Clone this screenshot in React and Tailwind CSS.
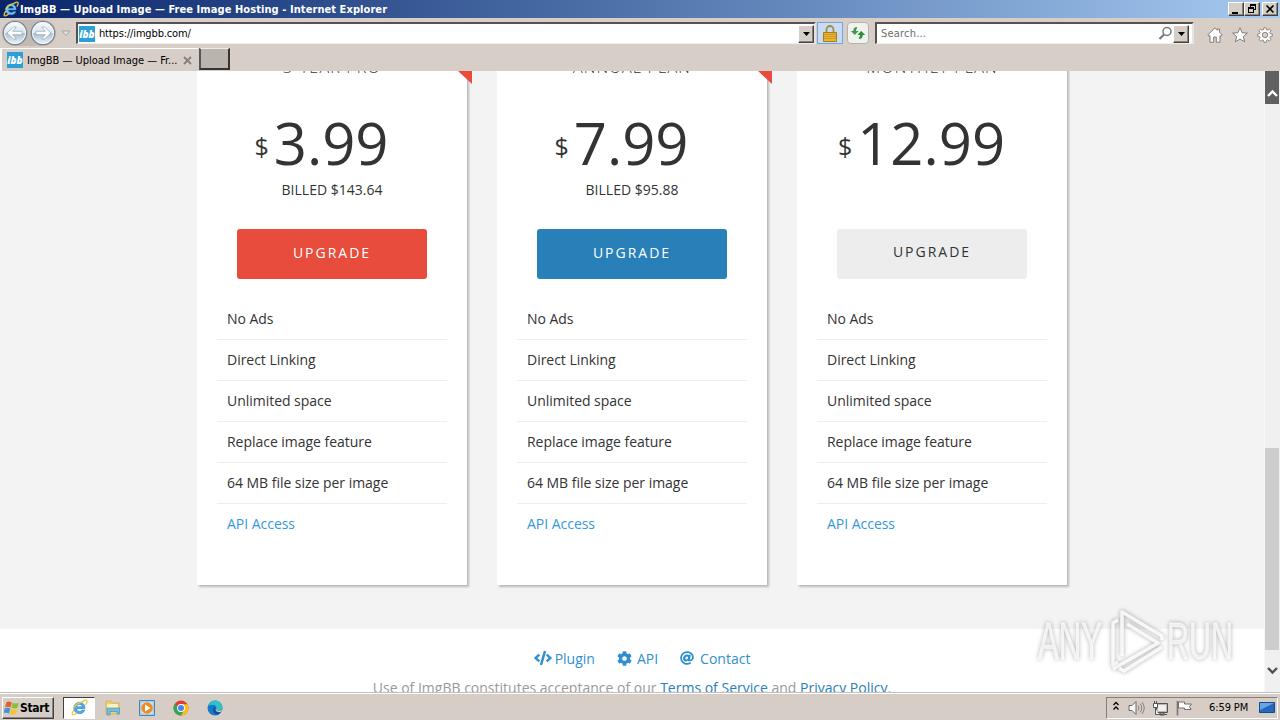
import clsx from "clsx";
import { FaCode, FaCog, FaAt } from "react-icons/fa";

const features = [
  "No Ads",
  "Direct Linking",
  "Unlimited space",
  "Replace image feature",
  "64 MB file size per image",
];

const plans = [
  {
    name: "3-year pro",
    price: "3.99",
    billed: "Billed $143.64",
    ribbon: true,
    button: "bg-[#e74c3c] text-white font-medium pb-[3px]",
  },
  {
    name: "Annual plan",
    price: "7.99",
    billed: "Billed $95.88",
    ribbon: true,
    button: "bg-[#2980b9] text-white font-medium pb-[3px]",
  },
  {
    name: "Monthly plan",
    price: "12.99",
    billed: "",
    ribbon: false,
    button: "bg-[#ededed] text-[#333] pb-[5px]",
  },
];

const raised =
  "bg-[#d4cec7] border border-t-white border-l-white border-r-[#404040] border-b-[#404040] shadow-[inset_-1px_-1px_0_#8a8580]";

function IELogo({ size = 16, fill = "#4ea9ea" }) {
  return (
    <svg width={size} height={size} viewBox="0 0 18 18" className="shrink-0">
      <path
        d="M14.900 10.200H6.100c.2 1.800 1.400 2.800 3 2.800 1.200 0 2-.5 2.500-1.300h3.100c-.8 2.500-3 3.900-5.700 3.900-3.600 0-6.100-2.400-6.100-6 0-3.500 2.600-6.200 6.100-6.200 3.700 0 6 2.700 5.900 6.800ZM6.200 8.100h5.500C11.500 6.600 10.500 5.700 9 5.700S6.400 6.600 6.200 8.100Z"
        fill={fill}
        stroke="#2678bd"
        strokeWidth=".5"
      />
      <path
        d="M3.300 11.200C.7 15 .5 17.500 3.300 16.500c1-.4 2-1 3-1.800M11.300 3.300C14.700.8 17.600.5 16.900 3.400c-.2.900-.7 1.900-1.400 2.900M3 9.500C4.500 6.500 8 4 11.500 3"
        fill="none"
        stroke="#f0c742"
        strokeWidth="1.400"
      />
    </svg>
  );
}

function Favicon() {
  return (
    <span className="flex h-4 w-4 shrink-0 items-center justify-center bg-[#2a9fd8] font-['Open_Sans',sans-serif] text-[10px] font-extrabold italic leading-none text-white">
      ibb
    </span>
  );
}

function NavCircle({ flip }) {
  return (
    <svg width="26" height="26" viewBox="0 0 26 26" className={clsx("shrink-0", flip && "-scale-x-100")}>
      <defs>
        <linearGradient id="orb" x1="0" y1="0" x2="0" y2="1">
          <stop offset="0" stopColor="#f9fcfe" />
          <stop offset=".48" stopColor="#d9e5ef" />
          <stop offset=".52" stopColor="#a9bfd4" />
          <stop offset="1" stopColor="#eef8fd" />
        </linearGradient>
      </defs>
      <circle cx="13" cy="13" r="11.700" fill="url(#orb)" stroke="#7d8791" strokeWidth="1.300" />
      <circle cx="13" cy="13" r="10.500" fill="none" stroke="#f4f8fb" strokeWidth="1" />
      <path d="M5 13l6.500-6h2.800l-3.600 4.300H20v3.400h-9.300l3.600 4.300h-2.800z" fill="#fff" stroke="#91a3b5" strokeWidth=".7" />
    </svg>
  );
}

function DropButton() {
  return (
    <span className={clsx("flex h-[18px] w-4 shrink-0 items-center justify-center", raised)}>
      <svg width="7" height="4" viewBox="0 0 7 4">
        <path d="M0 0h7L3.500 4z" fill="#000" />
      </svg>
    </span>
  );
}

function TitleBar() {
  return (
    <div className="flex h-[18px] items-center bg-gradient-to-r from-[#0a246a] to-[#a6caf0] pl-[3px] pr-[2px]">
      <IELogo size={16} fill="#6cc5f5" />
      <span className="ml-px whitespace-nowrap font-['DejaVu_Sans_Condensed','DejaVu_Sans',sans-serif] text-[11px] font-bold leading-none tracking-[0.075px] text-white">
        ImgBB — Upload Image — Free Image Hosting - Internet Explorer
      </span>
      <div className="ml-auto flex">
        <span className={clsx("h-[14px] w-4", raised)}>
          <svg width="14" height="12" viewBox="0 0 14 12">
            <path d="M3 9h6v2H3z" />
          </svg>
        </span>
        <span className={clsx("h-[14px] w-4", raised)}>
          <svg width="14" height="12" viewBox="0 0 14 12" shapeRendering="crispEdges">
            <path d="M5 1h6v6H9V6h1V3H6v1H5zM3 4h6v6H3zM4 6v3h4V6z" fillRule="evenodd" />
          </svg>
        </span>
        <span className={clsx("ml-[2px] h-[14px] w-4", raised)}>
          <svg width="14" height="12" viewBox="0 0 14 12">
            <path d="M3.500 2.500l7 7M10.500 2.500l-7 7" stroke="#000" strokeWidth="1.700" />
          </svg>
        </span>
      </div>
    </div>
  );
}

function Toolbar() {
  return (
    <div className="flex h-[30px] items-center bg-[#d6cec7] pl-[2px]">
      <div className="flex gap-[2px] rounded-full bg-[#c2bab4]">
        <NavCircle />
        <NavCircle flip />
      </div>
      <svg width="10" height="7" viewBox="0 0 10 7" className="ml-[5px] shrink-0">
        <path d="M1 1h8L5 5.500z" fill="#e6e2dd" stroke="#aaa49e" />
      </svg>
      <div className="ml-[5px] flex h-[22px] w-[740px] shrink-0 items-center border-2 border-b border-r-2 border-b-[#f3efeb] border-l-[#565250] border-r-[#e8e3de] border-t-[#565250] bg-white pl-px">
        <Favicon />
        <span className="ml-1 text-[11px] leading-none tracking-[-0.15px] text-black">https://imgbb.com/</span>
        <span className="ml-auto">
          <DropButton />
        </span>
      </div>
      <span className="ml-px flex h-[22px] w-[26px] shrink-0 items-center justify-center border border-[#76a5dc] bg-[#c8dcf6]">
        <svg width="14" height="17" viewBox="0 0 14 17">
          <path d="M3.500 8V4.500a3.500 3.500 0 017 0V8" fill="none" stroke="#a98b3e" strokeWidth="1.800" />
          <path d="M.5 7.500h13v9H.5z" fill="#e9b533" stroke="#a87b16" />
          <path d="M1 9.500h12M1 11.500h12M1 13.500h12" stroke="#c08d1e" strokeWidth=".7" />
        </svg>
      </span>
      <span className="ml-1 flex h-[22px] w-[22px] shrink-0 items-center justify-center rounded-sm border border-[#b3b3ae] bg-[#eff2ee]">
        <svg width="16" height="14" viewBox="0 0 16 14">
          <path d="M7 1C4.500 1 3.300 2.500 3.300 5H.8l4 4 3.800-4H6c0-1.300.2-2 1-2.500z" fill="#3d9a45" />
          <path d="M9 13c2.500 0 3.700-1.500 3.700-4h2.500l-4-4-3.800 4H10c0 1.300-.2 2-1 2.500z" fill="#2c8f33" />
        </svg>
      </span>
      <div className="ml-[6px] flex h-[22px] w-[319px] shrink-0 items-center border-2 border-b border-b-[#f3efeb] border-l-[#565250] border-r-[#e8e3de] border-t-[#565250] bg-white pl-1 pr-[3px]">
        <span className="text-[11px] leading-none tracking-[0.2px] text-[#6d6d6d]">Search...</span>
        <svg width="15" height="15" viewBox="0 0 15 15" className="ml-auto">
          <circle cx="9" cy="5.500" r="4" fill="none" stroke="#777" strokeWidth="1.500" />
          <path d="M6 8.500L1.500 13" stroke="#777" strokeWidth="2.200" />
        </svg>
        <DropButton />
      </div>
      <div className="ml-[13px] flex items-center gap-[9px] pt-[3px]">
        <svg width="16" height="16" viewBox="0 0 16 16">
          <path d="M8 .8L.8 8l1.400 1.300.8-.7v6.600h3.700V10h2.600v5.200H13V8.600l.8.700L15.200 8 12.500 5.200V2h-2v1.300z" fill="#fff" stroke="#77726d" strokeWidth=".9" />
        </svg>
        <svg width="16" height="16" viewBox="0 0 16 16">
          <path d="M8 .8l2.100 4.900 5.200.4-4 3.400 1.300 5.300L8 12l-4.600 2.800 1.300-5.300-4-3.400 5.200-.4z" fill="#fff" stroke="#77726d" strokeWidth=".9" />
        </svg>
        <svg width="16" height="16" viewBox="0 0 16 16">
          <path
            d="M6.900.8h2.200l.4 1.900 1.200.5 1.700-1.100L14 3.700l-1.100 1.700.5 1.200 1.900.4v2.200l-1.900.4-.5 1.200 1.100 1.700-1.600 1.500-1.700-1.100-1.200.5-.4 1.900H6.900l-.4-1.900-1.200-.5L3.600 14 2 12.500l1.100-1.700-.5-1.200L.7 9.200V7l1.900-.4.5-1.200L2 3.700l1.600-1.600 1.700 1.100 1.200-.5zM8 5.300a2.700 2.700 0 100 5.400 2.700 2.700 0 000-5.400z"
            fill="#fff"
            fillRule="evenodd"
            stroke="#77726d"
            strokeWidth=".8"
          />
        </svg>
      </div>
    </div>
  );
}

function TabRow() {
  return (
    <div className="flex h-[23px] bg-[#d6cec7]">
      <div className="flex h-[23px] w-[198px] items-center border-l-2 border-t border-white pl-[5px] text-black">
        <Favicon />
        <span className="ml-1 whitespace-nowrap text-[11px] leading-none tracking-[-0.02px]">
          ImgBB — Upload Image — Fr...
        </span>
        <svg width="9" height="9" viewBox="0 0 9 9" className="ml-auto mr-[6px] shrink-0">
          <path d="M1 1l7 7M8 1L1 8" stroke="#85807b" strokeWidth="1.800" />
        </svg>
      </div>
      <div className="ml-px h-[22px] w-[31px] border-2 border-t border-b-[#333] border-l-[#555] border-r-[#333] border-t-[#efebe7] bg-[#bbb3ad]" />
    </div>
  );
}

function PlanCard({ plan }) {
  return (
    <div className="relative h-[534px] w-[270px] bg-white pt-[2px] text-center text-[#333] shadow-[2px_2px_2px_rgba(0,0,0,0.24)]">
      {plan.ribbon && (
        <svg width="14" height="13" viewBox="0 0 14 13" className="absolute -right-[5px] top-5">
          <path d="M0 0h14v13z" fill="#e74c3c" />
        </svg>
      )}
      <h3 className="h-7 text-[16px] font-light uppercase leading-7 tracking-[1.2px]">{plan.name}</h3>
      <div className="mt-8 flex h-[60px] justify-center pr-[21px] leading-[60px]">
        <span className="mr-[5px] pt-[3px] text-[25px]">$</span>
        <span className="text-[58px]">{plan.price}</span>
      </div>
      <p className="mt-[7px] h-5 text-[14px] uppercase leading-5">{plan.billed}</p>
      <button
        type="button"
        className={clsx(
          "mx-10 mt-[29px] flex h-[50px] w-[190px] items-center justify-center rounded-[3px] text-[14px] tracking-[2px]",
          plan.button
        )}
      >
        UPGRADE
      </button>
      <ul className="mx-5 mt-5 text-left text-[14px] tracking-[-0.03px]">
        {features.map((feature) => (
          <li key={feature} className="h-[41px] border-b border-[#eee] px-[10px] leading-[40px]">
            {feature}
          </li>
        ))}
        <li className="h-[41px] px-[10px] leading-[40px] text-[#3498db]">API Access</li>
      </ul>
    </div>
  );
}

function Page() {
  return (
    <div className="flex h-[621px] overflow-hidden font-['Open_Sans',sans-serif]">
      <div className="h-full w-[1264px] overflow-hidden bg-[#f3f3f3]">
        <div className="-mt-5 flex h-[578px] justify-center gap-[30px]">
          {plans.map((plan) => (
            <PlanCard key={plan.name} plan={plan} />
          ))}
        </div>
        <div className="h-20 bg-white pt-5 text-[14px] leading-5 text-[#2f8fd0]">
          <div className="flex justify-center gap-[22px] pl-5">
            <span className="flex items-center gap-[3px]">
              <FaCode className="mb-[2px] h-[18px] w-[18px]" />
              Plugin
            </span>
            <span className="flex items-center gap-[5px]">
              <FaCog className="mb-[2px] h-[15px] w-[15px]" />
              API
            </span>
            <span className="flex items-center gap-[6px]">
              <FaAt className="mb-[2px] h-[14px] w-[14px]" />
              Contact
            </span>
          </div>
          <p className="mt-[9px] text-center text-[#999]">
            Use of ImgBB constitutes acceptance of our <span className="text-[#2980b9]">Terms of Service</span> and{" "}
            <span className="text-[#2980b9]">Privacy Policy</span>.
          </p>
        </div>
      </div>
      <div className="flex w-4 flex-col border-l border-[#f8f8f8] bg-[#f0f0f0]">
        <div className="flex h-[33px] w-[14px] items-end justify-center bg-[#606060] pb-[6px]">
          <svg width="11" height="9" viewBox="0 0 11 9">
            <path d="M1 7l4.500-4.500L10 7" fill="none" stroke="#fff" strokeWidth="2.400" />
          </svg>
        </div>
        <div className="mt-[344px] h-[202px] w-[14px] bg-[#cdcdcd]" />
        <div className="flex h-10 w-[14px] items-center justify-center">
          <svg width="11" height="9" viewBox="0 0 11 9">
            <path d="M1 2l4.500 4.500L10 2" fill="none" stroke="#505050" strokeWidth="2.400" />
          </svg>
        </div>
      </div>
    </div>
  );
}

function Watermark() {
  return (
    <svg
      width="210"
      height="76"
      viewBox="0 0 210 76"
      className="absolute left-[1030px] top-[604px] drop-shadow-[0_0_2px_rgba(0,0,0,0.4)]"
    >
      <g
        fill="#fff"
        fillOpacity=".75"
        stroke="#fff"
        strokeOpacity=".6"
        strokeWidth=".8"
        fontFamily="Liberation Sans Narrow, Liberation Sans, sans-serif"
        fontSize="52"
      >
        <text x="8" y="55" textLength="64" lengthAdjust="spacingAndGlyphs">
          ANY
        </text>
        <text x="137" y="55" textLength="66" lengthAdjust="spacingAndGlyphs">
          RUN
        </text>
      </g>
      <g fill="none" stroke="#fff" strokeOpacity=".85" strokeWidth="3.500" strokeLinejoin="round">
        <path d="M88 16l-5 3v42l5-3" />
        <path d="M92 52V8l40 24v4" />
        <path d="M97 20l31 19-45 26" />
        <path d="M132 43L94 67l-5-3" />
      </g>
    </svg>
  );
}

function Taskbar() {
  return (
    <div className="flex h-7 items-center border-t border-[#c4bfb9] bg-[#d6cec6] pl-[2px] pr-[2px] pt-[2px] shadow-[inset_0_1px_0_#fff]">
      <div className={clsx("flex h-[22px] w-[52px] items-center pl-px", raised)}>
        <svg width="16" height="16" viewBox="0 0 16 16" className="shrink-0">
          <path d="M2.500 2.200C4.500 1 6 1.500 7.800 2.500L6.500 7.500C4.700 6.500 3 6.300 1 7.200z" fill="#e6602c" />
          <path d="M8.600 2.800c2 1 4 1 6.300-.2L13.500 7.800c-2.300 1-4 .9-6.100-.1z" fill="#8bbf3c" />
          <path d="M.8 8.200C2.700 7.300 4.500 7.500 6.300 8.500L5 13.500c-1.800-1-3.600-1.100-5.500-.2z" fill="#4692d8" />
          <path d="M7.100 8.800c2 1 4 1.100 6.200.1L12 14c-2.300 1-4.200.8-6.200-.2z" fill="#f3c534" />
        </svg>
        <span className="text-[12px] font-bold leading-none tracking-[-0.35px] text-black">Start</span>
      </div>
      <div className="ml-[9px] flex h-[22px] w-8 items-center justify-center border border-b-white border-l-[#404040] border-r-white border-t-[#404040] bg-white">
        <IELogo size={17} />
      </div>
      <div className="ml-[10px] flex gap-[18px]">
        <svg width="16" height="16" viewBox="0 0 16 16">
          <path d="M1 3V1h5l1 2h7v11H1z" fill="#efcf68" stroke="#c6a24b" strokeWidth=".6" />
          <path d="M2 4h11v4H2z" fill="#fbf1b8" />
          <path d="M2 8h12.500v6H12v-2.500H5V15H2z" fill="#72bde4" stroke="#418db6" strokeWidth=".6" />
        </svg>
        <svg width="16" height="16" viewBox="0 0 16 16">
          <path d="M.5.5h15v15H.5z" fill="#a8d1ec" stroke="#4782b1" />
          <path d="M2.500 2.500h11v11h-11z" fill="#d5e8f3" />
          <circle cx="8" cy="8" r="5.800" fill="#f08a24" />
          <path d="M6 4.500L11.500 8 6 11.500z" fill="#fff" />
        </svg>
        <svg width="16" height="16" viewBox="0 0 16 16">
          <circle cx="8" cy="8" r="7.500" fill="#e33b2e" />
          <path d="M8 8L1.500 4.250A7.500 7.500 0 008 15.500l3.250-5.600z" fill="#33a852" />
          <path d="M8 8l3.200 1.900L8 15.500a7.500 7.500 0 006.500-11.200H8z" fill="#fbc116" />
          <circle cx="8" cy="8" r="3.900" fill="#fff" />
          <circle cx="8" cy="8" r="3" fill="#4285f4" />
        </svg>
        <svg width="16" height="16" viewBox="0 0 16 16">
          <circle cx="8" cy="8" r="7.500" fill="#1478cd" />
          <path d="M.7 6.500C2 2.500 4.800.5 8 .5c4.500 0 7.500 3 7.500 6.500 0 2.300-1.900 3.800-4.400 3.800-1.400 0-2.400-.4-2.400-1 0-.5.7-.8.7-1.900C9.400 6 7.700 4.800 5.500 4.800 3.600 4.800 1.800 5.500.7 6.500z" fill="#35c1c4" />
          <path d="M8.500 9.300c-.2 2.300 3 3.400 6 1.700-1 1.800-2.500 3.200-4.300 3.800C7.500 14.200 5.500 11.500 6.500 8.500c.4-1 1-1.500 1.800-1.600z" fill="#124f98" />
          <path d="M9 9.500c1 1.800 4 1.800 6.200.3l-.9 2C12 12.600 9 12 8.500 9.500z" fill="#d6cec6" />
        </svg>
      </div>
      <div className="ml-auto flex h-[22px] w-[172px] items-center border border-b-white border-l-[#85807a] border-r-white border-t-[#85807a] pl-[6px] pr-[2px]">
        <svg width="6" height="10" viewBox="0 0 6 10" className="mb-1">
          <path d="M.5 4L3 1.500 5.500 4M.5 8.500L3 6l2.500 2.500" fill="none" stroke="#000" strokeWidth="1.300" />
        </svg>
        <svg width="17" height="16" viewBox="0 0 17 16" className="ml-[9px]">
          <path d="M1 5.500h3L8 1.500v13l-4-4H1z" fill="#f8f8f8" stroke="#696969" />
          <path d="M10 5.500q2 2.500 0 5M12 3.500q3.500 4.500 0 9M14 2q4.500 6 0 12" fill="none" stroke="#85817d" />
        </svg>
        <svg width="17" height="16" viewBox="0 0 17 16" className="ml-[7px]">
          <path d="M4.500 3.500h11v9h-11z" fill="#b9b7b3" stroke="#555" />
          <path d="M6 5h8v6H6z" fill="#efefef" />
          <path d="M8 13h4v2H8zM6 14.500h9" stroke="#555" fill="#ddd" />
          <path d="M1.500 3.500h4v4h-4zM2.500 1v2M4.500 1v2M3.500 8v6.500h3" fill="#fff" stroke="#555" />
        </svg>
        <svg width="17" height="16" viewBox="0 0 17 16" className="ml-[7px]">
          <path d="M1.500 1v14.500" stroke="#77736f" strokeWidth="1.600" />
          <path d="M2.500 2h6v2h7l-2 2.500 1.500 3H8.500V8h-6z" fill="#fff" stroke="#66625e" strokeWidth=".9" />
        </svg>
        <span className="ml-4 whitespace-nowrap text-[11px] leading-none tracking-[-0.1px] text-black">6:59 PM</span>
        <svg width="16" height="14" viewBox="0 0 16 14" className="ml-auto">
          <path d="M.5 1.500h15v10H.5z" fill="#2868bb" stroke="#174a8a" />
          <path d="M1 2h14L1 9z" fill="#68a5e4" />
          <path d="M4 13h8" stroke="#b8cde2" />
        </svg>
      </div>
    </div>
  );
}

export default function App() {
  return (
    <div className="relative h-[720px] w-[1280px] overflow-hidden bg-[#d6cec7] font-['DejaVu_Sans_Condensed','DejaVu_Sans',sans-serif]">
      <TitleBar />
      <Toolbar />
      <TabRow />
      <Page />
      <Taskbar />
      <Watermark />
    </div>
  );
}
